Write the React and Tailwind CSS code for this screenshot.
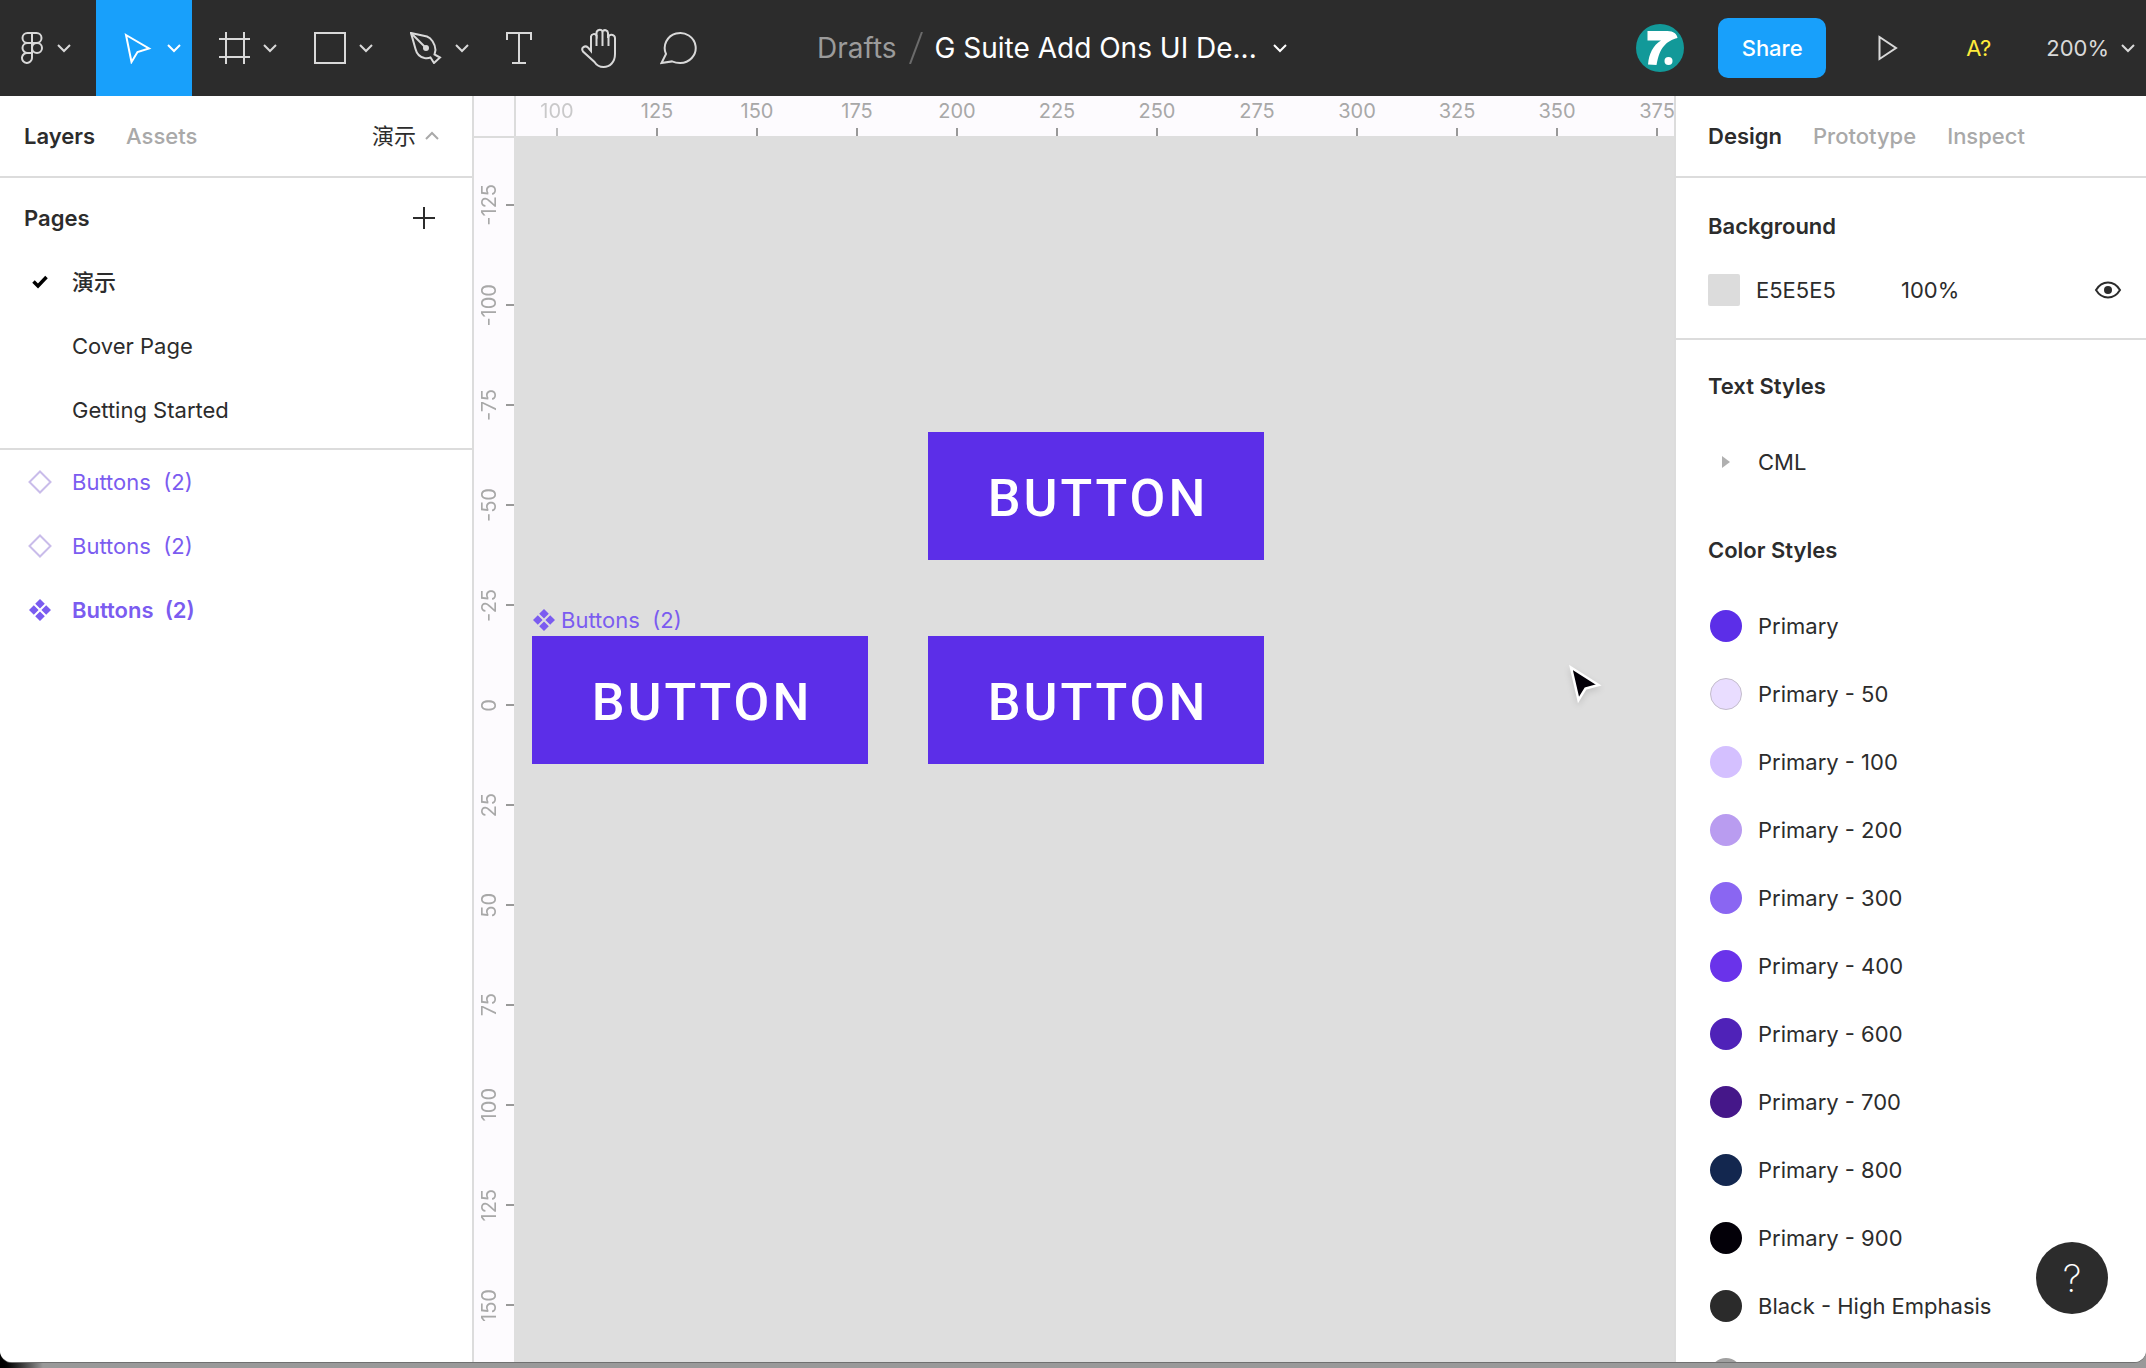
import React from "react";

const horizontalMarks = ["100", "125", "150", "175", "200", "225", "250", "275", "300", "325", "350", "375"];
const verticalMarks = ["-125", "-100", "-75", "-50", "-25", "0", "25", "50", "75", "100", "125", "150"];

const colorStyles = [
  { name: "Primary", swatch: "bg-[#5c2ee8]" },
  { name: "Primary - 50", swatch: "bg-[#e9ddff] border border-[#c4bdcc]" },
  { name: "Primary - 100", swatch: "bg-[#d4c0ff]" },
  { name: "Primary - 200", swatch: "bg-[#b99cf0]" },
  { name: "Primary - 300", swatch: "bg-[#8a66f2]" },
  { name: "Primary - 400", swatch: "bg-[#6a33ea]" },
  { name: "Primary - 600", swatch: "bg-[#4f22b8]" },
  { name: "Primary - 700", swatch: "bg-[#451789]" },
  { name: "Primary - 800", swatch: "bg-[#13274f]" },
  { name: "Primary - 900", swatch: "bg-[#030008]" },
  { name: "Black - High Emphasis", swatch: "bg-[#2b2b2b]" },
];

function Chevron({ up = false, className = "" }) {
  return (
    <svg width="14" height="10" viewBox="0 0 14 10" fill="none" stroke="currentColor" strokeWidth="2" className={className} aria-hidden="true">
      <path d={up ? "M1 8l6-6 6 6" : "M1 2l6 6 6-6"} />
    </svg>
  );
}

function Icon({ children, size = 32 }) {
  return (
    <svg width={size} height={size} viewBox={`0 0 ${size} ${size}`} fill="none" stroke="currentColor" strokeWidth="2" className="shrink-0" aria-hidden="true">
      {children}
    </svg>
  );
}

function FigmaIcon() {
  return (
    <Icon>
      <path d="M16 1h-4.500a5 5 0 0 0 0 10H16zM16 1h4.500a5 5 0 0 1 0 10H16M16 11h-4.500a5 5 0 0 0 0 10H16zM16 21h-4a5 5 0 1 0 4 5z" />
      <circle cx="21" cy="16" r="5" />
    </Icon>
  );
}

function MoveIcon() {
  return (
    <Icon>
      <path d="M4 3l23 13.500-11.500 3.500L9.500 30z" />
    </Icon>
  );
}

function FrameIcon() {
  return (
    <Icon>
      <path d="M8 0v32M26 0v32M1 7h31M1 25h31" />
    </Icon>
  );
}

function RectIcon() {
  return (
    <Icon>
      <path d="M1 1h30v30H1z" />
    </Icon>
  );
}

function PenIcon() {
  return (
    <Icon>
      <path d="M1 1l16 3.500c4 1.500 8 6.500 8.500 13.500l-1 4.500 5.500 3-6 5.500-3.500-5.500c-2 .8-4 .8-6 .5C9 25 6.500 21 5.500 17z" />
      <path d="M1 1l14 14" />
      <circle cx="16" cy="16" r="3" fill="currentColor" stroke="none" />
    </Icon>
  );
}

function TextIcon() {
  return (
    <Icon>
      <path d="M3 8V1h24v7M15 1v30M8 31h14" />
    </Icon>
  );
}

function HandIcon() {
  return (
    <Icon size={40}>
      <path d="M11 23V8.500a3 3 0 0 1 5.500-1V5a3.200 3.200 0 0 1 6-1.500A3 3 0 0 1 28 5v5a3.300 3.300 0 0 1 7 .5V26c0 8-5 13-11.500 13-4 0-7-1.800-9-5L3 23.500c-2.500-4 2-6.500 5-4z" />
      <path d="M16.500 7v11M22.500 4v14M28.500 8v10" />
    </Icon>
  );
}

function CommentIcon() {
  return (
    <Icon size={40}>
      <path d="M1.500 35l4.500-9A15.500 15 0 1 1 20 35c-3 0-5.500-.6-8-1.600z" />
    </Icon>
  );
}

function ComponentIcon() {
  return (
    <svg width="22" height="22" viewBox="0 0 22 22" fill="currentColor" className="shrink-0" aria-hidden="true">
      <path d="M11 0l4.800 4.800L11 9.600 6.200 4.800zM11 12.400l4.800 4.800L11 22l-4.800-4.800zM4.800 6.200L9.600 11l-4.800 4.800L0 11zM17.200 6.200L22 11l-4.800 4.800L12.400 11z" />
    </svg>
  );
}

function InstanceIcon() {
  return (
    <svg width="24" height="24" viewBox="0 0 24 24" fill="none" stroke="#c9bcea" strokeWidth="2" className="shrink-0" aria-hidden="true">
      <path d="M12 1.500L22.500 12 12 22.500 1.500 12z" />
    </svg>
  );
}

function ToolButton({ label, active = false, children }) {
  return (
    <button
      aria-label={label}
      className={
        active
          ? "flex h-full w-24 items-center gap-[13px] bg-[#18a0fb] pl-[26px] text-white"
          : "flex h-full w-24 items-center gap-[13px] pl-[26px] text-[#d9d9d9]"
      }
    >
      {children}
      <Chevron />
    </button>
  );
}

function Toolbar() {
  return (
    <header className="flex h-24 shrink-0 items-center bg-[#2c2c2c] text-[#d9d9d9]">
      <nav aria-label="Tools" className="flex h-full items-center">
        <button aria-label="Main menu" className="flex h-full w-24 items-center gap-[9px] pl-4">
          <FigmaIcon />
          <Chevron />
        </button>
        <ToolButton label="Move" active><MoveIcon /></ToolButton>
        <ToolButton label="Frame"><FrameIcon /></ToolButton>
        <ToolButton label="Rectangle"><RectIcon /></ToolButton>
        <ToolButton label="Pen"><PenIcon /></ToolButton>
        <button aria-label="Text" className="flex h-full w-20 items-center justify-center"><TextIcon /></button>
        <button aria-label="Hand" className="flex h-full w-20 items-center justify-center"><HandIcon /></button>
        <button aria-label="Comment" className="flex h-full w-20 items-center justify-center"><CommentIcon /></button>
      </nav>

      <div className="ml-[97px] flex items-center text-[28px] leading-9 whitespace-nowrap">
        <a href="#drafts" className="text-[#9b9b9b]">Drafts</a>
        <svg width="14" height="32" viewBox="0 0 14 32" stroke="#6b6b6b" strokeWidth="2" className="mx-3" aria-hidden="true">
          <path d="M1 32L13 0" />
        </svg>
        <button className="flex items-center gap-4 text-white">
          G Suite Add Ons UI De...
          <Chevron />
        </button>
      </div>

      <div className="ml-auto flex items-center text-[22px] leading-8">
        <svg width="48" height="48" viewBox="0 0 48 48" role="img" aria-label="User avatar">
          <circle cx="24" cy="24" r="24" fill="#129999" />
          <path d="M11.500 7h20c6 0 9.500 3 10 7-11 3-18 9-21 27l-8.500-.500c1-11 5-19 13-24H11.500z" fill="#fff" />
          <circle cx="32.500" cy="37" r="4" fill="#fff" />
        </svg>
        <button className="ml-[34px] h-[60px] w-[108px] rounded-[10px] bg-[#18a0fb] font-medium text-white">Share</button>
        <button aria-label="Present" className="ml-[52px]">
          <svg width="20" height="26" viewBox="0 0 20 26" fill="none" stroke="currentColor" strokeWidth="2" aria-hidden="true">
            <path d="M1.500 2l16.500 11-16.500 11z" />
          </svg>
        </button>
        <button className="ml-[68px] text-[#ffeb3b]">A?</button>
        <button className="mr-[11px] ml-[55px] flex items-center gap-3">
          200%
          <Chevron />
        </button>
      </div>
    </header>
  );
}

function LayersPanel() {
  return (
    <aside className="w-[474px] shrink-0 border-r-2 border-[#dcdcdc] bg-white">
      <div className="flex h-[82px] items-center border-b-2 border-[#dcdcdc] px-6">
        <button className="font-semibold">Layers</button>
        <button className="ml-[31px] font-medium text-[#a9a9a9]">Assets</button>
        <button className="mr-[9px] ml-auto flex items-center gap-[9px]">
          演示
          <Chevron up className="text-[#a9a9a9]" />
        </button>
      </div>

      <section className="border-b-2 border-[#dcdcdc] pt-2 pb-1.5">
        <div className="flex h-16 items-center justify-between pr-9 pl-6">
          <h2 className="font-semibold">Pages</h2>
          <button aria-label="Add page">
            <svg width="24" height="24" viewBox="0 0 24 24" stroke="currentColor" strokeWidth="2" aria-hidden="true">
              <path d="M12 1v22M1 12h22" />
            </svg>
          </button>
        </div>
        <ul>
          <li>
            <button className="flex h-16 w-full items-center pl-8 font-medium">
              <svg width="16" height="14" viewBox="0 0 16 14" fill="none" stroke="#000" strokeWidth="3.500" className="mr-6" aria-hidden="true">
                <path d="M1.500 6.500L6 11l8.500-9" />
              </svg>
              演示
            </button>
          </li>
          <li><button className="flex h-16 w-full items-center pl-[72px]">Cover Page</button></li>
          <li><button className="flex h-16 w-full items-center pl-[72px]">Getting Started</button></li>
        </ul>
      </section>

      <ul className="whitespace-pre text-[#7b5cf0]">
        <li><button className="flex h-16 w-full items-center gap-5 pl-7"><InstanceIcon />{"Buttons  (2)"}</button></li>
        <li><button className="flex h-16 w-full items-center gap-5 pl-7"><InstanceIcon />{"Buttons  (2)"}</button></li>
        <li>
          <button className="flex h-16 w-full items-center gap-5 pl-7 font-semibold">
            <span className="flex w-6 justify-center"><ComponentIcon /></span>
            {"Buttons  (2)"}
          </button>
        </li>
      </ul>
    </aside>
  );
}

function HorizontalRuler() {
  return (
    <div className="flex h-10 shrink-0 overflow-hidden bg-[#fdfbfe] text-[20px] leading-6 text-[#a8a8a8]">
      <div className="h-full w-[42px] shrink-0 border-r-2 border-[#dcdcdc]" />
      <div className="-ml-[9px] flex">
        {horizontalMarks.map((mark, index) => (
          <div key={mark} className={index === 0 ? "flex w-[100px] flex-col items-center justify-between pt-[3px] opacity-60" : "flex w-[100px] flex-col items-center justify-between pt-[3px]"}>
            <span>{mark}</span>
            <span className="h-2 w-0.5 bg-[#999999]" />
          </div>
        ))}
      </div>
    </div>
  );
}

function VerticalRuler() {
  return (
    <div className="w-10 shrink-0 overflow-hidden border-t-2 border-[#dcdcdc] bg-[#fdfbfe] pt-[17px] text-[20px] leading-6 text-[#a8a8a8]">
      {verticalMarks.map((mark) => (
        <div key={mark} className="flex h-[100px] items-center justify-between pl-[3px]">
          <span className="rotate-180 [writing-mode:vertical-rl]">{mark}</span>
          <span className="h-0.5 w-2 bg-[#999999]" />
        </div>
      ))}
    </div>
  );
}

function CanvasButton({ place }) {
  return (
    <button className={`absolute flex h-32 w-[336px] items-center justify-center bg-[#5c2ee8] pt-1.5 pl-1 font-[Roboto,sans-serif] text-[52px] leading-none font-medium tracking-[3px] text-white ${place}`}>
      BUTTON
    </button>
  );
}

function Canvas() {
  return (
    <main className="flex min-w-0 flex-1 flex-col border-r-2 border-[#dcdcdc]">
      <HorizontalRuler />
      <div className="flex min-h-0 flex-1">
        <VerticalRuler />
        <div className="relative flex-1 overflow-hidden bg-[#dedede]">
          <CanvasButton place="left-[414px] top-[296px]" />
          <div className="absolute top-[468px] left-[19px] flex items-center gap-1.5 whitespace-pre text-[#7b5cf0]">
            <ComponentIcon />
            {"Buttons  (2)"}
          </div>
          <CanvasButton place="left-[18px] top-[500px]" />
          <CanvasButton place="left-[414px] top-[500px]" />
          <svg width="40" height="44" viewBox="0 0 40 44" className="absolute top-[526px] left-[1053px] drop-shadow-md" aria-hidden="true">
            <path d="M4 5.500L31.500 23 18.500 26.500 11.500 38z" fill="#030008" stroke="#fff" strokeWidth="2.500" />
          </svg>
        </div>
      </div>
    </main>
  );
}

function DesignPanel() {
  return (
    <aside className="relative w-[470px] shrink-0 overflow-hidden bg-white">
      <div className="flex h-[82px] items-center gap-[31px] border-b-2 border-[#dcdcdc] px-8">
        <button className="font-semibold">Design</button>
        <button className="font-medium text-[#a9a9a9]">Prototype</button>
        <button className="font-medium text-[#a9a9a9]">Inspect</button>
      </div>

      <section className="border-b-2 border-[#dcdcdc] pt-4 pb-4">
        <h2 className="flex h-16 items-center px-8 font-semibold">Background</h2>
        <div className="flex h-16 items-center pr-6 pl-8">
          <span className="size-8 rounded-xs bg-[#dcdcdc]" />
          <input aria-label="Background color" defaultValue="E5E5E5" className="ml-4 w-[145px] bg-transparent outline-none" />
          <input aria-label="Background opacity" defaultValue="100%" className="w-20 bg-transparent outline-none" />
          <button aria-label="Toggle background visibility" className="ml-auto">
            <svg width="28" height="20" viewBox="0 0 28 20" fill="none" stroke="currentColor" strokeWidth="2" aria-hidden="true">
              <path d="M2 10c3-5 7.500-7.500 12-7.500S23 5 26 10c-3 5-7.500 7.500-12 7.500S5 15 2 10z" />
              <circle cx="14" cy="10" r="4" fill="currentColor" stroke="none" />
            </svg>
          </button>
        </div>
      </section>

      <section className="pt-3.5">
        <h2 className="flex h-16 items-center px-8 font-semibold">Text Styles</h2>
        <button className="mt-2.5 flex h-[68px] w-full items-center gap-7 pl-[46px]">
          <svg width="8" height="12" viewBox="0 0 8 12" fill="#b0b0b0" aria-hidden="true">
            <path d="M0 0l8 6-8 6z" />
          </svg>
          CML
        </button>
      </section>

      <section className="pt-[22px]">
        <h2 className="flex h-16 items-center px-8 font-semibold">Color Styles</h2>
        <ul className="pt-2.5">
          {colorStyles.map(({ name, swatch }) => (
            <li key={name}>
              <button className="flex h-[68px] w-full items-center gap-4 pl-[34px]">
                <span className={`size-8 shrink-0 rounded-full ${swatch}`} />
                {name}
              </button>
            </li>
          ))}
          <li>
            <button aria-label="Next color style" className="flex h-[68px] w-full items-center pl-[34px]">
              <span className="size-8 rounded-full bg-[#a0a0a0]" />
            </button>
          </li>
        </ul>
      </section>

      <button aria-label="Help" className="absolute right-[38px] bottom-12 flex size-[72px] items-center justify-center rounded-full bg-[#2c2c2c] text-[38px] leading-none font-extralight text-white">
        ?
      </button>
    </aside>
  );
}

export default function App() {
  return (
    <div className="h-screen overflow-hidden bg-linear-to-r from-black via-[#999999] via-[2%] to-[#999999] pb-1.5 font-[Inter,'Noto_Sans_CJK_SC',sans-serif]">
      <div className="flex h-full flex-col overflow-hidden rounded-b-xl bg-white text-[22px] leading-8 text-[#2c2c2c] shadow-[0_1px_0_#707070]">
        <Toolbar />
        <div className="flex min-h-0 flex-1">
          <LayersPanel />
          <Canvas />
          <DesignPanel />
        </div>
      </div>
    </div>
  );
}
